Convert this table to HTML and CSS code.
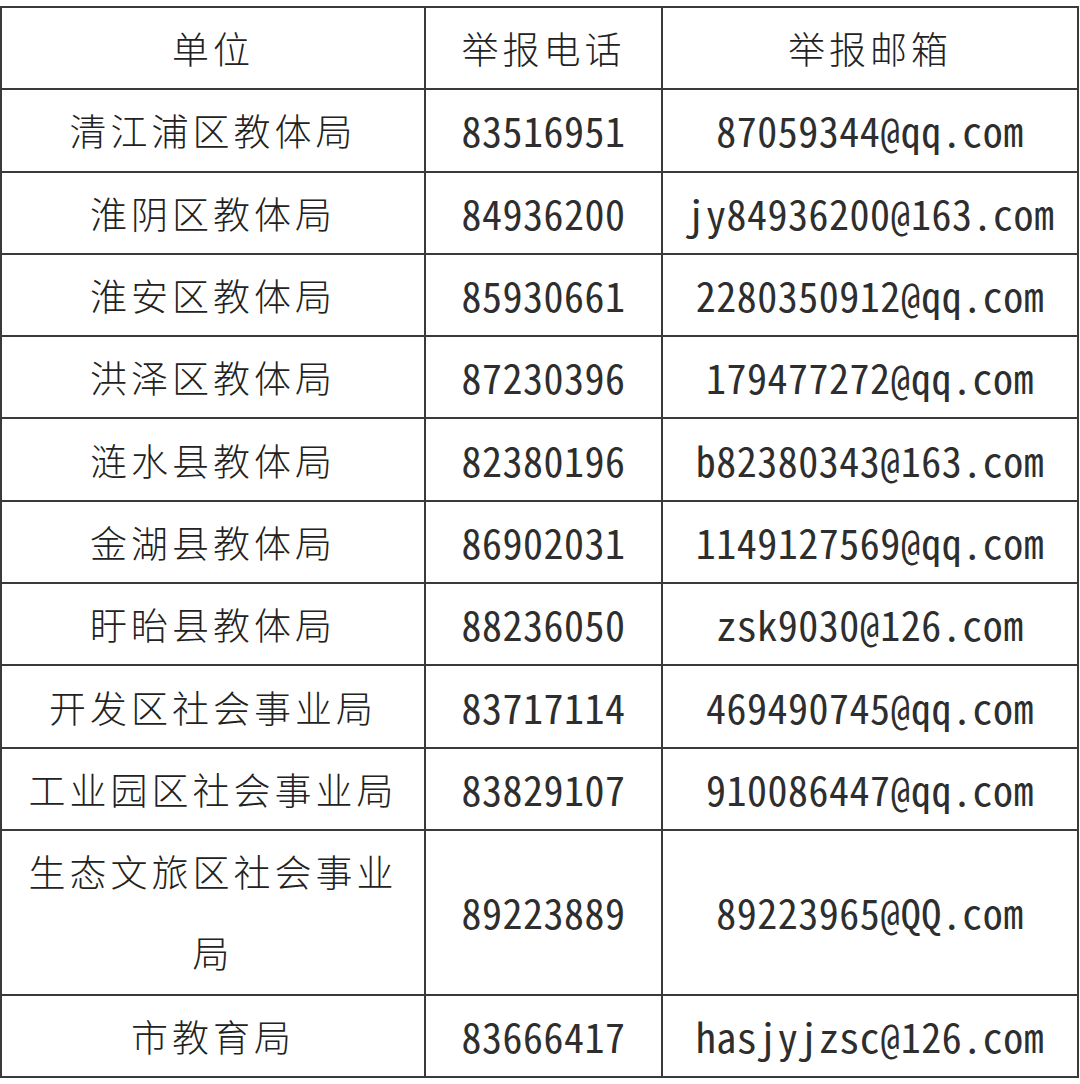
FILE: index.html
```html
<!DOCTYPE html>
<html lang="zh-CN">
<head>
<meta charset="utf-8">
<title>举报电话</title>
<link rel="stylesheet" href="styles.css">
</head>
<body>
<table class="report">
  <colgroup>
    <col class="c-unit">
    <col class="c-tel">
    <col class="c-mail">
  </colgroup>
  <thead>
    <tr><th class="cn">单位</th><th class="cn">举报电话</th><th class="cn">举报邮箱</th></tr>
  </thead>
  <tbody>
    <tr><td class="cn">清江浦区教体局</td><td class="num">83516951</td><td class="num">87059344@qq.com</td></tr>
    <tr><td class="cn">淮阴区教体局</td><td class="num">84936200</td><td class="num">jy84936200@163.com</td></tr>
    <tr><td class="cn">淮安区教体局</td><td class="num">85930661</td><td class="num">2280350912@qq.com</td></tr>
    <tr><td class="cn">洪泽区教体局</td><td class="num">87230396</td><td class="num">179477272@qq.com</td></tr>
    <tr><td class="cn">涟水县教体局</td><td class="num">82380196</td><td class="num">b82380343@163.com</td></tr>
    <tr><td class="cn">金湖县教体局</td><td class="num">86902031</td><td class="num">1149127569@qq.com</td></tr>
    <tr><td class="cn">盱眙县教体局</td><td class="num">88236050</td><td class="num">zsk9030@126.com</td></tr>
    <tr><td class="cn">开发区社会事业局</td><td class="num">83717114</td><td class="num">469490745@qq.com</td></tr>
    <tr><td class="cn">工业园区社会事业局</td><td class="num">83829107</td><td class="num">910086447@qq.com</td></tr>
    <tr class="tall"><td class="cn">生态文旅区社会事业局</td><td class="num">89223889</td><td class="num">89223965@QQ.com</td></tr>
    <tr><td class="cn">市教育局</td><td class="num">83666417</td><td class="num">hasjyjzsc@126.com</td></tr>
  </tbody>
</table>
</body>
</html>
```
FILE: styles.css
```css
html, body {
  margin: 0;
  padding: 0;
  background: #ffffff;
}

body {
  padding-top: 6px;
}

.report {
  border-collapse: collapse;
  table-layout: fixed;
  width: 1079px;
  color: #1c1c1c;
}

.c-unit { width: 424px; }
.c-tel { width: 237px; }
.c-mail { width: 416px; }

.report th,
.report td {
  border: 2px solid #3a3a3a;
  height: 82.3px;
  box-sizing: border-box;
  padding: 0 20px;
  text-align: center;
  vertical-align: middle;
  font-weight: 300;
  white-space: normal;
  line-height: 60px;
}

.report tr.tall td {
  height: 164.6px;
}

.report tr.tall td.cn {
  line-height: 81px;
}

.cn {
  font-family: "Noto Sans CJK SC", "Noto Sans", sans-serif;
  font-size: 37px;
  letter-spacing: 4px;
}

.report th.cn,
.report td.cn {
  font-weight: 300;
  color: #222222;
}

.num {
  font-family: "Noto Sans Mono CJK SC", "DejaVu Sans Mono", monospace;
  font-size: 40px;
  letter-spacing: 0.5px;
  white-space: nowrap;
}

.report td.num {
  padding: 0;
  font-weight: 300;
  color: #2e2e2e;
}
```
